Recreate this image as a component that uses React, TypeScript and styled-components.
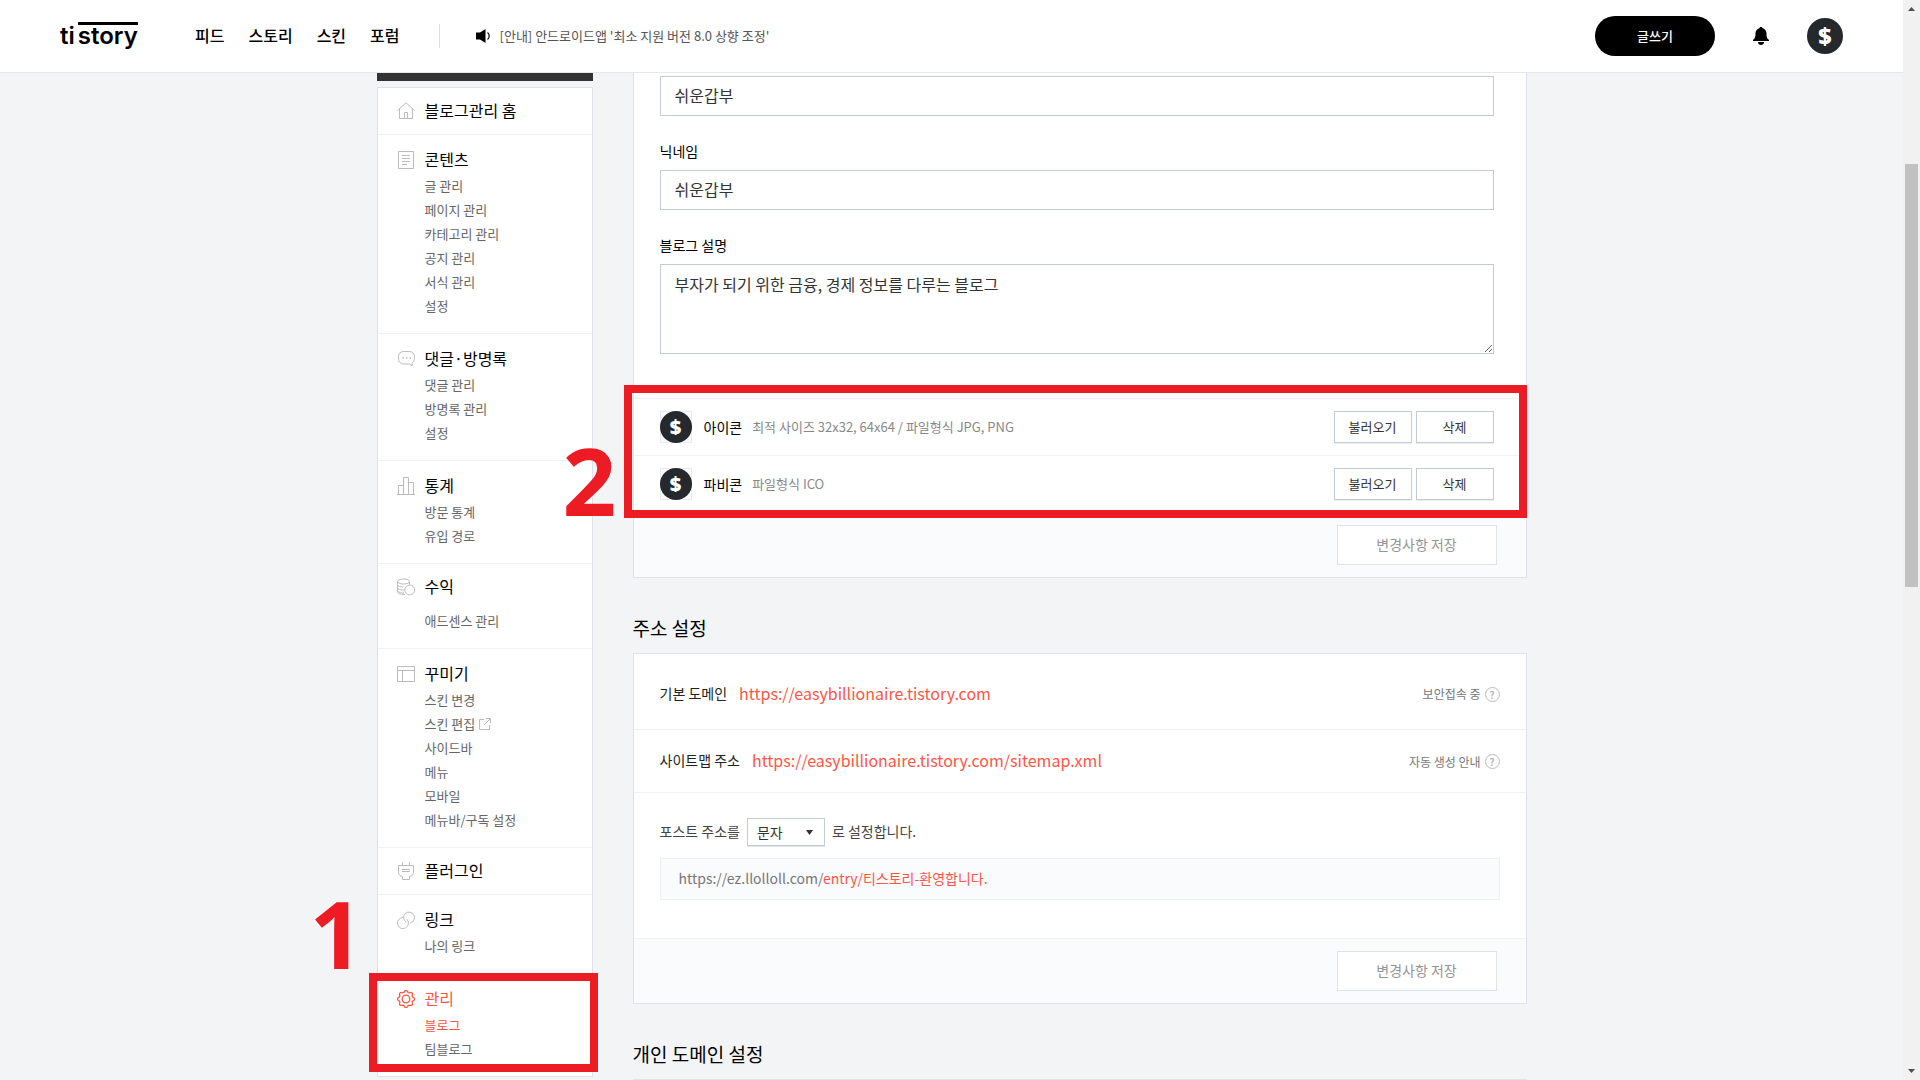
import React from "react";
import styled, { createGlobalStyle, css } from "styled-components";

const C = {
  bg: "#f3f4f6",
  line: "#dfe2eb",
  soft: "#f1f2f4",
  field: "#c4cbd6",
  accent: "#ff5544",
  mark: "#ed1c24",
};

const Global = createGlobalStyle`
  *, *::before, *::after { box-sizing: border-box; }
  body { margin: 0; background: ${C.bg}; }
  body, button, input, textarea, select {
    font-family: "Noto Sans CJK KR", "Noto Sans", sans-serif;
  }
  ul, h1, h2, h3, p { margin: 0; padding: 0; font-weight: 400; }
  ul { list-style: none; }
  a { color: inherit; text-decoration: none; }
`;

const Screen = styled.div`
  display: flex;
  height: 100vh;
  overflow: hidden;
`;

const Page = styled.div`
  flex: 1;
  min-width: 0;
  overflow: hidden;
`;

/* Scroll bar */

const Track = styled.div`
  width: 17px;
  display: flex;
  flex-direction: column;
  align-items: center;
  justify-content: space-between;
  padding: 6px 0;
  background: #f1f1f1;
`;

const ThumbLane = styled.div`
  flex: 1;
  width: 13px;
  display: grid;
  grid-template-rows: 153fr 422fr 482fr;
`;

const Thumb = styled.div`
  grid-row: 2;
  background: #c1c1c1;
`;

/* Header */

const Header = styled.header`
  display: flex;
  align-items: center;
  height: 73px;
  padding: 0 60px;
  background: #fff;
  border-bottom: 1px solid #e6e8eb;
`;

const Logo = styled.a`
  display: flex;
  gap: 3px;
  width: 80px;
  font: 600 24px/32px Inter, sans-serif;
  color: #000;
`;

const LogoBarred = styled.span`
  position: relative;

  &::before {
    content: "";
    position: absolute;
    left: 0;
    right: 0;
    top: 2px;
    height: 3px;
    background: #000;
  }
`;

const Nav = styled.nav`
  display: flex;
  gap: 24px;
  margin-left: 55px;
  padding: 0 39px 2px 0;
  border-right: 1px solid #dcdcdc;
  font-size: 16px;
  font-weight: 500;
  line-height: 22px;
  color: #000;
`;

const Notice = styled.a`
  display: flex;
  align-items: center;
  gap: 9px;
  margin-left: 36px;
  font-size: 13px;
  line-height: 20px;
  color: #555;
`;

const HeaderActions = styled.div`
  display: flex;
  align-items: center;
  margin-left: auto;
  gap: 38px;
`;

const WriteButton = styled.button`
  width: 120px;
  height: 40px;
  padding: 0 0 2px;
  border: 0;
  border-radius: 20px;
  background: #000;
  color: #fff;
  font-size: 13px;
  font-weight: 500;
`;

const IconButton = styled.button`
  display: flex;
  padding: 0;
  border: 0;
  background: none;
`;

const Coin = styled.span<{ $size: number }>`
  display: flex;
  align-items: center;
  justify-content: center;
  width: ${(p) => p.$size}px;
  height: ${(p) => p.$size}px;
  border-radius: 50%;
  background: #25282d;
  color: #fff;
  font: 800 ${(p) => (p.$size > 32 ? 23 : 20)}px/1 "Open Sans", sans-serif;
`;

/* Body */

const Columns = styled.div`
  display: flex;
  align-items: flex-start;
  gap: 40px;
  max-width: 1150px;
  margin: 0 auto;
`;

const Side = styled.aside`
  width: 216px;
  flex: none;
`;

const ProfileEdge = styled.div`
  height: 8px;
  margin-bottom: 6px;
  background: #333;
`;

const Menu = styled.ul`
  border: 1px solid ${C.line};
  border-top: 0;
  background: #fff;
`;

const MenuGroup = styled.li<{ $tight?: boolean }>`
  position: relative;
  padding: ${(p) => (p.$tight ? 10 : 12)}px 19px 0;
  border-top: 1px solid ${C.soft};

  &:first-child {
    border-top-color: ${C.line};
  }
`;

const MenuTitle = styled.a<{ $on?: boolean; $alone?: boolean }>`
  display: flex;
  align-items: center;
  gap: 10px;
  padding-bottom: ${(p) => (p.$alone ? 12 : 0)}px;
  font-size: 16px;
  line-height: 24px;
  color: ${(p) => (p.$on ? C.accent : "#000")};

  svg {
    margin-top: 2px;
    color: ${(p) => (p.$on ? C.accent : "#bbb")};
  }
`;

const SubMenu = styled.ul<{ $loose?: boolean }>`
  padding: ${(p) => (p.$loose ? 11 : 3)}px 0 15px 28px;
  font-size: 13px;
  line-height: 24px;
  color: #666;
`;

const SubLink = styled.a<{ $on?: boolean }>`
  display: flex;
  align-items: center;
  gap: 4px;
  color: ${(p) => (p.$on ? C.accent : "#666")};
`;

const Main = styled.main`
  flex: 1;
  min-width: 0;
`;

const Card = styled.section<{ $cut?: boolean }>`
  border: 1px solid ${C.line};
  background: #fff;
  ${(p) => p.$cut && css`border-top: 0;`}
`;

const Heading = styled.h2`
  padding: 36px 0 11px;
  font-size: 19px;
  line-height: 28px;
  color: #000;
`;

const Fields = styled.div`
  display: flex;
  flex-direction: column;
  padding: 3px 32px 44px 26px;
`;

const FieldLabel = styled.label`
  margin: 25px 0 9px;
  font-size: 14px;
  line-height: 20px;
  color: #000;
`;

const fieldBox = css`
  display: block;
  width: 100%;
  border: 1px solid ${C.field};
  border-radius: 0;
  background: #fff;
  font-size: 16px;
  line-height: 24px;
  color: #333;
  outline: 0;
`;

const TextInput = styled.input`
  ${fieldBox}
  height: 40px;
  padding: 0 14px 2px;
`;

const TextArea = styled.textarea`
  ${fieldBox}
  height: 90px;
  padding: 7px 14px;
  resize: vertical;
`;

const Marked = styled.div`
  position: relative;
`;

const MarkFrame = styled.div<{ $inset: string }>`
  position: absolute;
  inset: ${(p) => p.$inset};
  border: 8px solid ${C.mark};
  pointer-events: none;
`;

const MarkNumber = styled.div<{ $left: number; $top: number }>`
  position: absolute;
  left: ${(p) => p.$left}px;
  top: ${(p) => p.$top}px;
  font: 700 94px/98px "Open Sans", sans-serif;
  color: ${C.mark};
  pointer-events: none;
`;

const IconRow = styled.div`
  display: flex;
  align-items: center;
  height: 57px;
  padding: 0 32px 0 26px;
  border-top: 1px solid ${C.soft};
`;

const Thumbnail = styled.span`
  display: flex;
  box-shadow: inset 0 0 0 1px #e9eaec;
  background: #fafafc;
`;

const IconName = styled.span`
  margin-left: 12px;
  font-size: 14px;
  line-height: 20px;
  color: #000;
`;

const IconHint = styled.span`
  margin-left: 10px;
  font-size: 13px;
  line-height: 20px;
  color: #888;
`;

const RowButtons = styled.div`
  display: flex;
  gap: 4px;
  margin-left: auto;
`;

const SmallButton = styled.button`
  width: 78px;
  height: 32px;
  padding: 0 0 2px;
  border: 1px solid ${C.field};
  background: #fff;
  box-shadow: 0 1px 0 #eceef0;
  font-size: 13px;
  color: #333;
`;

const CardFooter = styled.div`
  display: flex;
  justify-content: flex-end;
  padding: 12px 29px 12px 26px;
  border-top: 1px solid ${C.soft};
  background: #fafbfd;
`;

const SaveButton = styled.button`
  width: 160px;
  height: 40px;
  padding: 0 0 2px;
  border: 1px solid ${C.line};
  background: #fff;
  font-size: 14px;
  color: #959595;
`;

const DomainRow = styled.div<{ $first?: boolean }>`
  display: flex;
  align-items: center;
  gap: 12px;
  height: ${(p) => (p.$first ? 75 : 63)}px;
  padding: ${(p) => (p.$first ? "2px 26px 0" : "0 26px 2px")};
  border-top: ${(p) => (p.$first ? 0 : 1)}px solid ${C.soft};
  font-size: 14px;
  line-height: 24px;
  color: #222;
`;

const DomainLink = styled.a`
  font-size: 16px;
  color: ${C.accent};
`;

const Help = styled.button`
  display: flex;
  align-items: center;
  gap: 4px;
  margin-left: auto;
  padding: 3px 0 0;
  border: 0;
  background: none;
  font-size: 12px;
  line-height: 20px;
  color: #777;
`;

const Question = styled.span`
  width: 15px;
  height: 15px;
  border: 1px solid #bbb;
  border-radius: 50%;
  font-size: 10px;
  font-weight: 500;
  line-height: 13px;
  text-align: center;
  color: #aaa;
`;

const PostAddress = styled.div`
  padding: 25px 26px 38px;
  border-top: 1px solid ${C.soft};
`;

const PostRule = styled.div`
  display: flex;
  align-items: flex-start;
  height: 28px;
  font-size: 14px;
  line-height: 26px;
  color: #444;
`;

const SelectBox = styled.span`
  position: relative;
  margin: 0 7px;

  svg {
    position: absolute;
    right: 12px;
    top: 12px;
    pointer-events: none;
  }
`;

const Select = styled.select`
  display: block;
  appearance: none;
  width: 78px;
  height: 28px;
  padding: 0 9px;
  border: 1px solid ${C.field};
  border-radius: 0;
  background: #fff;
  box-shadow: 0 1px 0 #e4e6ea;
  font-size: 14px;
  color: #333;
`;

const AddressSample = styled.p`
  margin-top: 12px;
  padding: 7px 18px 9px;
  border: 1px solid #eff1f5;
  background: #fafbfd;
  font-size: 14px;
  line-height: 24px;
  color: #777;

  em {
    font-style: normal;
    color: ${C.accent};
  }
`;

const NextCardBody = styled.div`
  height: 120px;
`;

/* Icons */

const gear = Array.from({ length: 96 }, (_, i) => {
  const t = (i / 96) * Math.PI * 2;
  const r = 7.7 + 0.9 * Math.cos(8 * t);
  return `${(9 + r * Math.cos(t)).toFixed(2)} ${(9 + r * Math.sin(t)).toFixed(2)}`;
}).join("L");

const shapes: Record<string, React.ReactNode> = {
  home: <path d="M.5 8.500L9 .8l8.500 7.700M2.500 7v9.500h13V7M7.500 16.500v-6h3v6" />,
  content: <path d="M1.500 .5h15v17h-15zM5 4.500h8M5 7.500h8M5 10.500h8M5 13.500h5" />,
  comment: (
    <>
      <path d="M6.500 1.500h6a5 5 0 0 1 5 5v2a5 5 0 0 1-2.500 4.400l.2 3L12.300 14H6.500a5 5 0 0 1-5-5V6.500a5 5 0 0 1 5-5z" />
      <path d="M5.500 8h1.500M9 8h1.500M12.500 8H14" strokeWidth="1.500" />
    </>
  ),
  stats: <path d="M0 17.500h18M1.500 17.500v-9h5M6.500 17.500V.5h5v17M11.500 5.500h5v12" />,
  coins: (
    <>
      <ellipse cx="6.500" cy="3.500" rx="6" ry="2.500" />
      <path d="M.5 3.500v3C.5 8 3 9 6.500 9M.5 6.500v3C.5 11 3 12 7 12M.5 9.500v3c0 1.500 3 2.500 6.500 2.500M.5 12.500c0 3 2 4 7.500 4M12.500 3.500v3" />
      <circle cx="12.700" cy="12" r="4.900" fill="#fff" />
    </>
  ),
  layout: <path d="M.5 1.500h17v15H.5zM.5 5.500h17M5.500 5.500v11" />,
  plugin: <path d="M1.500 3.500h15v7c0 2.500-2 3.500-4 4v3h-7v-3c-2-.5-4-1.500-4-4zM5.500 0v3.500M12.500 0v3.500M5 7.500h8M5 9.500h8" />,
  link: (
    <>
      <path d="M9.300 11.200A5.500 5.500 0 0 1 8.200 2.600 5.500 5.500 0 1 1 13 12" />
      <path d="M6 6.600A5.500 5.500 0 1 0 9.800 8.200" />
    </>
  ),
  gear: (
    <>
      <path d={`M${gear}Z`} strokeWidth="1.300" />
      <circle cx="9" cy="9" r="3.800" strokeWidth="1.300" />
    </>
  ),
};

const MenuIcon = ({ name }: { name: string }) => (
  <svg width="18" height="18" viewBox="0 0 18 18" fill="none" stroke="currentColor" aria-hidden="true">
    {shapes[name]}
  </svg>
);

const ExternalIcon = () => (
  <svg width="12" height="12" viewBox="0 0 12 12" fill="none" stroke="#bbb" aria-hidden="true">
    <path d="M5 1.500H.5v10h10V7M7 .5h4.500V5M11.500 .5L5 7" />
  </svg>
);

const BellIcon = () => (
  <svg width="16" height="18" viewBox="0 0 16 18" aria-hidden="true">
    <path d="M8 0C6.800 0 6.500 .7 6.300 1.200 3.800 1.900 2.500 4 2.500 6.500c0 3.500-.3 4.500-2.500 6.500v1h16v-1c-2.200-2-2.500-3-2.500-6.500 0-2.500-1.300-4.600-3.800-5.300C9.500 .7 9.200 0 8 0zM5 15h6c0 2-1.300 3-3 3s-3-1-3-3z" />
  </svg>
);

const SpeakerIcon = () => (
  <svg width="15" height="14" viewBox="0 0 15 14" aria-hidden="true">
    <path d="M0 3.500h4L9.500 0v14L4 10.500H0z" />
    <path d="M11.500 3.500c2.300 1.800 2.300 5.200 0 7" fill="none" stroke="#000" strokeWidth="1.200" />
  </svg>
);

/* Content */

type Group = {
  icon: string;
  title: string;
  items?: string[];
  loose?: boolean;
  on?: boolean;
};

const groups: Group[] = [
  { icon: "home", title: "블로그관리 홈" },
  { icon: "content", title: "콘텐츠", items: ["글 관리", "페이지 관리", "카테고리 관리", "공지 관리", "서식 관리", "설정"] },
  { icon: "comment", title: "댓글·방명록", items: ["댓글 관리", "방명록 관리", "설정"] },
  { icon: "stats", title: "통계", items: ["방문 통계", "유입 경로"] },
  { icon: "coins", title: "수익", items: ["애드센스 관리"], loose: true },
  { icon: "layout", title: "꾸미기", items: ["스킨 변경", "스킨 편집", "사이드바", "메뉴", "모바일", "메뉴바/구독 설정"] },
  { icon: "plugin", title: "플러그인" },
  { icon: "link", title: "링크", items: ["나의 링크"] },
  { icon: "gear", title: "관리", items: ["블로그", "팀블로그"], on: true },
];

const iconRows = [
  { name: "아이콘", hint: "최적 사이즈 32x32, 64x64 / 파일형식 JPG, PNG" },
  { name: "파비콘", hint: "파일형식 ICO" },
];

const Sidebar = () => (
  <Side>
    <ProfileEdge />
    <Menu>
      {groups.map((g) => (
        <MenuGroup key={g.title} $tight={!g.items || g.loose}>
          <MenuTitle href="#" $on={g.on} $alone={!g.items}>
            <MenuIcon name={g.icon} />
            {g.title}
          </MenuTitle>
          {g.items && (
            <SubMenu $loose={g.loose}>
              {g.items.map((t) => (
                <li key={t}>
                  <SubLink href="#" $on={t === "블로그"}>
                    {t}
                    {t === "스킨 편집" && <ExternalIcon />}
                  </SubLink>
                </li>
              ))}
            </SubMenu>
          )}
          {g.on && (
            <>
              <MarkFrame $inset="-1px -6px 4px -9px" />
              <MarkNumber $left={-68} $top={-90}>1</MarkNumber>
            </>
          )}
        </MenuGroup>
      ))}
    </Menu>
  </Side>
);

const Footer = () => (
  <CardFooter>
    <SaveButton type="button">변경사항 저장</SaveButton>
  </CardFooter>
);

export default function App() {
  return (
    <>
      <Global />
      <Screen>
        <Page>
          <Header>
            <Logo href="#">
              <span>ti</span>
              <LogoBarred>story</LogoBarred>
            </Logo>
            <Nav>
              <a href="#">피드</a>
              <a href="#">스토리</a>
              <a href="#">스킨</a>
              <a href="#">포럼</a>
            </Nav>
            <Notice href="#">
              <SpeakerIcon />
              [안내] 안드로이드앱 '최소 지원 버전 8.0 상향 조정'
            </Notice>
            <HeaderActions>
              <WriteButton type="button">글쓰기</WriteButton>
              <IconButton type="button" aria-label="알림">
                <BellIcon />
              </IconButton>
              <IconButton type="button" aria-label="내 계정">
                <Coin $size={36}>$</Coin>
              </IconButton>
            </HeaderActions>
          </Header>

          <Columns>
            <Sidebar />
            <Main>
              <Card $cut>
                <Fields>
                  <TextInput aria-label="블로그 이름" defaultValue="쉬운갑부" />
                  <FieldLabel htmlFor="nickname">닉네임</FieldLabel>
                  <TextInput id="nickname" defaultValue="쉬운갑부" />
                  <FieldLabel htmlFor="description">블로그 설명</FieldLabel>
                  <TextArea id="description" defaultValue="부자가 되기 위한 금융, 경제 정보를 다루는 블로그" />
                </Fields>
                <Marked>
                  {iconRows.map((r) => (
                    <IconRow key={r.name}>
                      <Thumbnail>
                        <Coin $size={32}>$</Coin>
                      </Thumbnail>
                      <IconName>{r.name}</IconName>
                      <IconHint>{r.hint}</IconHint>
                      <RowButtons>
                        <SmallButton type="button">불러오기</SmallButton>
                        <SmallButton type="button">삭제</SmallButton>
                      </RowButtons>
                    </IconRow>
                  ))}
                  <MarkFrame $inset="-13px -1px -6px -10px" />
                  <MarkNumber $left={-71} $top={33}>2</MarkNumber>
                </Marked>
                <Footer />
              </Card>

              <Heading>주소 설정</Heading>
              <Card>
                <DomainRow $first>
                  기본 도메인
                  <DomainLink href="#">https://easybillionaire.tistory.com</DomainLink>
                  <Help type="button">
                    보안접속 중 <Question>?</Question>
                  </Help>
                </DomainRow>
                <DomainRow>
                  사이트맵 주소
                  <DomainLink href="#">https://easybillionaire.tistory.com/sitemap.xml</DomainLink>
                  <Help type="button">
                    자동 생성 안내 <Question>?</Question>
                  </Help>
                </DomainRow>
                <PostAddress>
                  <PostRule>
                    <label htmlFor="post-type">포스트 주소를</label>
                    <SelectBox>
                      <Select id="post-type" defaultValue="문자">
                        <option>문자</option>
                        <option>숫자</option>
                      </Select>
                      <svg width="7" height="5" viewBox="0 0 7 5" aria-hidden="true">
                        <path d="M0 0h7L3.500 5z" fill="#333" />
                      </svg>
                    </SelectBox>
                    로 설정합니다.
                  </PostRule>
                  <AddressSample>
                    https://ez.llolloll.com/<em>entry/티스토리-환영합니다.</em>
                  </AddressSample>
                </PostAddress>
                <Footer />
              </Card>

              <Heading>개인 도메인 설정</Heading>
              <Card>
                <NextCardBody />
              </Card>
            </Main>
          </Columns>
        </Page>
        <Track aria-hidden="true">
          <svg width="7" height="5" viewBox="0 0 7 5">
            <path d="M0 5h7L3.500 1z" fill="#505050" />
          </svg>
          <ThumbLane>
            <Thumb />
          </ThumbLane>
          <svg width="7" height="5" viewBox="0 0 7 5">
            <path d="M0 0h7L3.500 4z" fill="#505050" />
          </svg>
        </Track>
      </Screen>
    </>
  );
}
